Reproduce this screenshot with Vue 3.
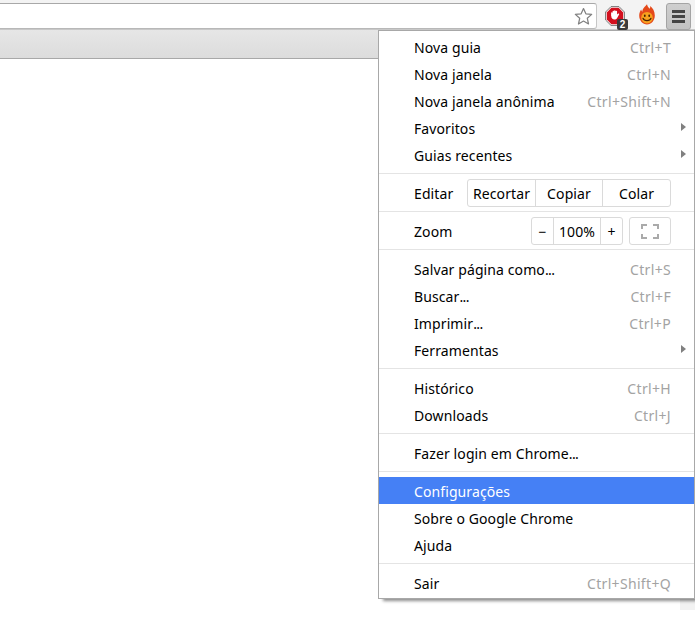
<script setup>
const sections = [
  { cls: 'first', items: [
    { label: 'Nova guia', key: 'Ctrl+T' },
    { label: 'Nova janela', key: 'Ctrl+N' },
    { label: 'Nova janela anônima', key: 'Ctrl+Shift+N' },
    { label: 'Favoritos', arrow: true },
    { label: 'Guias recentes', arrow: true },
  ] },
  { kind: 'edit' },
  { kind: 'zoom' },
  { items: [
    { label: 'Salvar página como', dots: true, key: 'Ctrl+S' },
    { label: 'Buscar', dots: true, key: 'Ctrl+F' },
    { label: 'Imprimir', dots: true, key: 'Ctrl+P' },
    { label: 'Ferramentas', arrow: true },
  ] },
  { items: [
    { label: 'Histórico', key: 'Ctrl+H' },
    { label: 'Downloads', key: 'Ctrl+J' },
  ] },
  { items: [{ label: 'Fazer login em Chrome', dots: true }] },
  { items: [
    { label: 'Configurações', active: true },
    { label: 'Sobre o Google Chrome' },
    { label: 'Ajuda' },
  ] },
  { cls: 'last', items: [{ label: 'Sair', key: 'Ctrl+Shift+Q' }] },
]
</script>

<template>
  <div class="page">
    <header class="toolbar">
      <div class="omnibox">
        <svg class="star" width="19" height="19" viewBox="0 0 20 20">
          <path d="M10 1.600l2.500 5.600 6.100.6-4.600 4.100 1.300 6-5.300-3.100-5.300 3.100 1.300-6L1.400 7.800l6.100-.6z" fill="#fff" stroke="#808080" stroke-width="1.300" stroke-linejoin="round" />
        </svg>
      </div>
      <div class="ext adblock">
        <svg width="20" height="20" viewBox="0 0 20 20">
          <path d="M6 .6h8L19.400 6v8L14 19.400H6L.6 14V6z" fill="#fff" stroke="#777" stroke-width="1" />
          <path d="M6.400 1.800h7.200l4.600 4.600v7.200l-4.600 4.600H6.400l-4.600-4.600V6.400z" fill="#d3101e" />
          <path transform="translate(1.700 1.400) scale(.83)" d="M5.300 10.500V6.600a.9.900 0 0 1 1.800 0V4.800a.9.900 0 0 1 1.800 0v-.5a.9.900 0 0 1 1.800 0v.6a.9.900 0 0 1 1.800 0v3.600l1-1a.9.900 0 0 1 1.400 1.100l-2.300 4.300c-.7 1.200-1.600 1.800-3.100 1.800-2.500 0-4-1.600-4-4.200z" fill="#fff" />
        </svg>
        <span class="badge">2</span>
      </div>
      <div class="ext flame">
        <svg width="18" height="21" viewBox="0 0 18 21">
          <path d="M9 .3c.5 2.300 1.500 3.300 2.700 4.400.5-.8.700-1.700.5-2.700 2.500 1.900 4.600 5 4.600 9.600 0 5.200-3.600 8.900-7.800 8.900s-7.800-3.700-7.800-8.900c0-2.700.9-4.600 2-6.200.1 1 .5 1.800 1.200 2.400C4.200 4.800 6.700 3 9 .3z" fill="#e4491a" />
          <circle cx="9" cy="13.700" r="5.800" fill="#f7a21f" />
          <ellipse cx="6.800" cy="11.800" rx=".9" ry="1.200" fill="#4a2200" />
          <ellipse cx="11.200" cy="11.800" rx=".9" ry="1.200" fill="#4a2200" />
          <path d="M5 14.300c1.200 3.200 6.800 3.200 8 0" fill="none" stroke="#4a2200" stroke-width="1.200" stroke-linecap="round" />
        </svg>
      </div>
      <button class="hamburger" type="button" aria-label="Menu">
        <span></span><span></span><span></span>
      </button>
    </header>
    <div class="bookmarks"></div>

    <div class="scroll-end"></div>

    <nav class="menu">
      <section v-for="(s, i) in sections" :key="i" class="section" :class="s.cls">
        <div v-if="s.kind === 'edit'" class="tool-row">
          <span class="label">Editar</span>
          <div class="group edit-group">
            <span class="cell c-cut">Recortar</span>
            <span class="cell c-copy">Copiar</span>
            <span class="cell c-paste">Colar</span>
          </div>
        </div>
        <div v-else-if="s.kind === 'zoom'" class="tool-row">
          <span class="label">Zoom</span>
          <div class="group zoom-group">
            <span class="cell c-minus">−</span>
            <span class="cell c-pct">100%</span>
            <span class="cell c-plus">+</span>
          </div>
          <div class="group full">
            <svg width="18" height="15" viewBox="0 0 18 15">
              <path d="M0 5V0h6v2H2v3zM12 0h6v5h-2V2h-4zM0 10h2v3h4v2H0zM16 10h2v5h-6v-2h4z" fill="#aaa" />
            </svg>
          </div>
        </div>
        <template v-else>
          <div v-for="item in s.items" :key="item.label" class="row" :class="{ active: item.active }">
            <span class="label">{{ item.label }}<span v-if="item.dots" class="dots">...</span></span>
            <span v-if="item.key" class="key">{{ item.key }}</span>
            <i v-if="item.arrow" class="arrow"></i>
          </div>
        </template>
      </section>
    </nav>
  </div>
</template>

<style scoped>
.page {
  position: relative;
  width: 695px;
  height: 643px;
  overflow: hidden;
  background: #fff;
  font-family: "Noto Sans", "Open Sans", sans-serif;
  font-size: 14px;
  color: #000;
}
.toolbar {
  display: flex;
  align-items: flex-start;
  height: 29px;
  padding-top: 3px;
  box-sizing: border-box;
  background: #f3f3f3;
}
.omnibox {
  width: 597px;
  height: 26px;
  box-sizing: border-box;
  display: flex;
  justify-content: flex-end;
  align-items: center;
  padding-right: 3px;
  background: #fff;
  border: 1px solid #c6c6c6;
  border-top-color: #a8a8a8;
  border-left: 0;
  border-bottom-color: #b8b8b8;
  border-radius: 0 3px 3px 0;
}
.star { display: block; }
.ext {
  position: relative;
  display: flex;
  justify-content: center;
  flex: none;
}
.adblock { width: 20px; margin: 3px 0 0 8px; }
.flame { width: 20px; margin: 1px 0 0 12px; }
.badge {
  position: absolute;
  left: 12px;
  top: 13px;
  width: 11px;
  height: 11px;
  background: #3a3a3a;
  border-radius: 2px;
  color: #fff;
  font: bold 10px/11px "Liberation Sans", sans-serif;
  text-align: center;
}
.hamburger {
  flex: none;
  margin: 0 0 0 9px;
  padding: 0;
  width: 25px;
  height: 27px;
  box-sizing: border-box;
  display: flex;
  flex-direction: column;
  align-items: center;
  justify-content: center;
  gap: 2px;
  background: linear-gradient(#cfcfcf, #c2c2c2);
  border: 1px solid #a4a4a4;
  border-radius: 3px;
}
.hamburger span {
  display: block;
  width: 13px;
  height: 3px;
  background: #444;
}
.bookmarks {
  height: 30px;
  box-sizing: border-box;
  background: linear-gradient(#e6e6e6, #dcdcdc);
  border-top: 1px solid #c8c8c8;
  border-bottom: 1px solid #a8a8a8;
}
.scroll-end {
  position: absolute;
  right: 0;
  top: 59px;
  width: 15px;
  height: 551px;
  background: #f2f2f2;
}
.menu {
  position: absolute;
  left: 378px;
  top: 30px;
  width: 317px;
  box-sizing: border-box;
  background: #fff;
  border: 1px solid #a8a8a8;
  box-shadow: 4px 3px 3px -1px rgba(0, 0, 0, 0.45);
  letter-spacing: 0.1px;
}
.section {
  padding: 5px 0;
  border-bottom: 1px solid #e4e4e4;
}
.section.first { padding: 3px 0 4px; }
.section.last { padding: 5px 0 2px; border-bottom: 0; }
.row {
  position: relative;
  display: flex;
  justify-content: space-between;
  align-items: center;
  height: 27px;
  box-sizing: border-box;
  padding: 2px 23px 0 35px;
}
.first .row { padding-top: 0; }
.row.active { background: #4580f5; color: #fff; }
.dots { letter-spacing: -0.6px; }
.key { color: #a3a3a3; letter-spacing: 0.33px; }
.arrow {
  position: absolute;
  left: 302px;
  top: 9px;
  width: 0;
  height: 0;
  border-left: 5px solid #808080;
  border-top: 4px solid transparent;
  border-bottom: 4px solid transparent;
}
.first .arrow { top: 8px; }
.tool-row {
  display: flex;
  align-items: center;
  height: 28px;
  padding: 0 23px 0 35px;
  margin-bottom: -1px;
}
.tool-row .label { margin-right: auto; }
.group {
  display: flex;
  height: 28px;
  box-sizing: border-box;
  border: 1px solid #dadada;
  border-radius: 3px;
}
.cell {
  display: flex;
  align-items: center;
  justify-content: center;
  border-left: 1px solid #dadada;
  box-sizing: border-box;
}
.cell:first-child { border-left: 0; }
.c-cut { width: 67px; }
.c-copy { width: 67px; }
.c-paste { width: 68px; }
.c-minus { width: 21px; }
.c-pct { width: 47px; }
.c-plus { width: 22px; }
.full {
  margin-left: 6px;
  width: 42px;
  align-items: center;
  justify-content: center;
}
</style>
